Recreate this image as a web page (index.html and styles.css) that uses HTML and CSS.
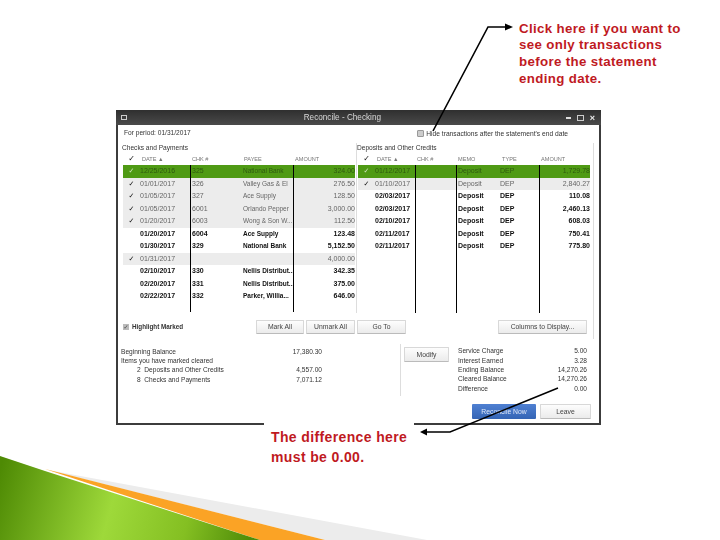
FILE: index.html
```html
<!DOCTYPE html>
<html lang="en">
<head>
<meta charset="utf-8">
<title>Reconcile - Checking</title>
<link rel="stylesheet" href="styles.css">
</head>
<body>
<div class="stage">
  <div class="window">
    <div class="titlebar">
      <span class="sysicon"></span>
      <span class="wintitle">Reconcile - Checking</span>
      <span class="winctrls"><i class="min"></i><i class="max"></i><b>×</b></span>
    </div>
    <div class="period">
      <span>For period: 01/31/2017</span>
      <label class="hide"><span class="box"></span>Hide transactions after the statement's end date</label>
    </div>
    <div class="lists">
      <section class="list left">
        <h2>Checks and Payments</h2>
        <div class="row head"><span class="ck">✓</span><span>DATE ▲</span><span>CHK #</span><span>PAYEE</span><span>AMOUNT</span></div>
        <div class="row sel"><span class="ck">✓</span><span>12/25/2016</span><span>325</span><span>National Bank</span><span>324.00</span></div>
        <div class="row mark"><span class="ck">✓</span><span>01/01/2017</span><span>326</span><span>Valley Gas &amp; El</span><span>276.50</span></div>
        <div class="row mark"><span class="ck">✓</span><span>01/05/2017</span><span>327</span><span>Ace Supply</span><span>128.50</span></div>
        <div class="row mark"><span class="ck">✓</span><span>01/05/2017</span><span>6001</span><span>Orlando Pepper</span><span>3,000.00</span></div>
        <div class="row mark"><span class="ck">✓</span><span>01/20/2017</span><span>6003</span><span>Wong &amp; Son W...</span><span>112.50</span></div>
        <div class="row"><span class="ck"></span><span>01/20/2017</span><span>6004</span><span>Ace Supply</span><span>123.48</span></div>
        <div class="row"><span class="ck"></span><span>01/30/2017</span><span>329</span><span>National Bank</span><span>5,152.50</span></div>
        <div class="row mark"><span class="ck">✓</span><span>01/31/2017</span><span></span><span></span><span>4,000.00</span></div>
        <div class="row"><span class="ck"></span><span>02/10/2017</span><span>330</span><span>Nellis Distribut...</span><span>342.35</span></div>
        <div class="row"><span class="ck"></span><span>02/20/2017</span><span>331</span><span>Nellis Distribut...</span><span>375.00</span></div>
        <div class="row"><span class="ck"></span><span>02/22/2017</span><span>332</span><span>Parker, Willia...</span><span>646.00</span></div>
        <div class="row tail"><span></span><span></span><span></span><span></span><span></span></div>
      </section>
      <section class="list right">
        <h2>Deposits and Other Credits</h2>
        <div class="row head"><span class="ck">✓</span><span>DATE ▲</span><span>CHK #</span><span>MEMO</span><span>TYPE</span><span>AMOUNT</span></div>
        <div class="row sel"><span class="ck">✓</span><span>01/12/2017</span><span></span><span>Deposit</span><span>DEP</span><span>1,729.78</span></div>
        <div class="row mark"><span class="ck">✓</span><span>01/10/2017</span><span></span><span>Deposit</span><span>DEP</span><span>2,840.27</span></div>
        <div class="row"><span class="ck"></span><span>02/03/2017</span><span></span><span>Deposit</span><span>DEP</span><span>110.08</span></div>
        <div class="row"><span class="ck"></span><span>02/03/2017</span><span></span><span>Deposit</span><span>DEP</span><span>2,460.13</span></div>
        <div class="row"><span class="ck"></span><span>02/10/2017</span><span></span><span>Deposit</span><span>DEP</span><span>608.03</span></div>
        <div class="row"><span class="ck"></span><span>02/11/2017</span><span></span><span>Deposit</span><span>DEP</span><span>750.41</span></div>
        <div class="row"><span class="ck"></span><span>02/11/2017</span><span></span><span>Deposit</span><span>DEP</span><span>775.80</span></div>
        <div class="row fill"><span></span><span></span><span></span><span></span><span></span><span></span></div>
      </section>
    </div>
    <div class="actions">
      <label class="highlight"><span class="tick">✓</span>Highlight Marked</label>
      <button class="btn mark-all">Mark All</button>
      <button class="btn unmark-all">Unmark All</button>
      <button class="btn goto">Go To</button>
      <button class="btn columns">Columns to Display...</button>
    </div>
    <div class="summary">
      <div class="sum-left">
        <div class="sum-row"><span>Beginning Balance</span><span>17,380.30</span></div>
        <div class="sum-row"><span>Items you have marked cleared</span><span></span></div>
        <div class="sum-row sub"><span>2 &nbsp;Deposits and Other Credits</span><span>4,557.00</span></div>
        <div class="sum-row sub"><span>8 &nbsp;Checks and Payments</span><span>7,071.12</span></div>
      </div>
      <div class="sum-right">
        <button class="btn modify">Modify</button>
        <div class="totals">
          <div class="sum-row"><span>Service Charge</span><span>5.00</span></div>
          <div class="sum-row"><span>Interest Earned</span><span>3.28</span></div>
          <div class="sum-row"><span>Ending Balance</span><span>14,270.26</span></div>
          <div class="sum-row"><span>Cleared Balance</span><span>14,270.26</span></div>
          <div class="sum-row"><span>Difference</span><span>0.00</span></div>
        </div>
      </div>
    </div>
    <div class="finish">
      <button class="btn primary">Reconcile Now</button>
      <button class="btn leave">Leave</button>
    </div>
  </div>

  <svg class="swoosh" viewBox="0 0 720 540" aria-hidden="true">
    <defs>
      <linearGradient id="leaf" gradientUnits="userSpaceOnUse" x1="0" y1="470" x2="250" y2="540">
        <stop offset="0" stop-color="#4e8a04"/>
        <stop offset=".45" stop-color="#9ed93a"/>
        <stop offset=".75" stop-color="#84bf22"/>
        <stop offset="1" stop-color="#4f8c08"/>
      </linearGradient>
    </defs>
    <polygon points="48,470 427,540 325,540" fill="#ececec"/>
    <polygon points="45,469 325,540 260,540" fill="#fba325"/>
    <polygon points="0,456 45,471 260,540 0,540" fill="url(#leaf)"/>
  </svg>

  <div class="note note-diff">The difference here<br>must be <strong>0.00</strong>.</div>
  <div class="note note-click">Click here if you want to<br>see only transactions<br>before the statement<br>ending date.</div>

  <svg class="arrows" viewBox="0 0 720 540" aria-hidden="true">
    <polyline points="433,131 488,27 506,27" fill="none" stroke="#000" stroke-width="1.6"/>
    <polygon points="513,27 505,23.5 505,30.5" fill="#000"/>
    <polyline points="558,388 450,432 426,432" fill="none" stroke="#000" stroke-width="1.4"/>
    <polygon points="420,432 427,428.5 427,435.5" fill="#000"/>
  </svg>
</div>
</body>
</html>
```
FILE: styles.css
```css
* { box-sizing: border-box; }
html, body { margin: 0; padding: 0; background: #fff; }
.stage {
  position: relative;
  width: 720px;
  height: 540px;
  overflow: hidden;
  font-family: "Liberation Sans", Arial, sans-serif;
}
.window {
  width: 485px;
  height: 315px;
  margin: 110px 0 0 116px;
  float: left;
  background: #fff;
  border: 2px solid #3c3c3c;
  border-top: 0;
  font-size: 7px;
  color: #222;
  filter: blur(0.35px);
}
.titlebar {
  height: 15px;
  margin: 0 -2px;
  padding: 0 6px 0 5px;
  display: flex;
  align-items: center;
  position: relative;
  background: linear-gradient(#2f2f2f, #4a4a4a);
  color: #d8d8d8;
}
.sysicon { width: 6px; height: 5px; border: 1px solid #ccc; }
.wintitle { flex: 1; text-align: center; font-size: 8.2px; padding-right: 8px; }
.winctrls { display: flex; align-items: center; gap: 6px; }
.winctrls .min { width: 5px; height: 2px; background: #ddd; }
.winctrls .max { width: 7px; height: 6px; border: 1px solid #ccc; }
.winctrls b { font-size: 9px; line-height: 8px; color: #eee; }
.period {
  height: 18px;
  padding: 3px 31px 0 6px;
  display: flex;
  align-items: flex-start;
  font-size: 6.6px;
  line-height: 9px;
  color: #333;
}
.hide { display: flex; align-items: center; margin-left: auto; white-space: nowrap; font-size: 6.7px; line-height: 9px; padding-top: 1px; }
.box {
  width: 7px;
  height: 7px;
  margin-right: 2px;
  border: 1px solid #999;
  border-radius: 1px;
  background: #ccc;
}
.lists { display: flex; padding-left: 4px; }
.list { width: 235px; }
.list.left { border-right: 1px solid #ddd; }
.list.right { width: 237px; border-right: 1px solid #ddd; }
.list h2 {
  height: 10px;
  margin: 0;
  font-size: 6.6px;
  line-height: 10px;
  font-weight: normal;
  color: #333;
}
.row {
  display: grid;
  height: 12.55px;
  margin-left: 1px;
  align-items: stretch;
  font-weight: bold;
  color: #111;
  white-space: nowrap;
}
.left .row { grid-template-columns: 17px 50px 52px 51px 62px; width: 232px; }
.right .row { grid-template-columns: 17px 40px 41px 44px 39px 51px; width: 232px; }
.row > span { line-height: 12.55px; overflow: hidden; }
.left .row > span:nth-child(3),
.left .row > span:nth-child(5),
.right .row > span:nth-child(3),
.right .row > span:nth-child(4),
.right .row > span:nth-child(6) { border-left: 1px solid #000; padding-left: 1px; }
.row > span:last-child { text-align: right; padding-right: 0; }
.left .row > span:nth-child(4) { padding-left: 1px; font-size: 6.5px; }
.ck { font-family: "DejaVu Sans", sans-serif; font-size: 7px; font-weight: normal; text-align: center; color: #222; }
.row.head {
  height: 12px;
  font-size: 5.6px;
  font-weight: normal;
  color: #777;
}
.row.head > span,
.row.head > span:nth-child(n) { border-left: 0; line-height: 12px; padding-left: 2px; text-align: left; font-size: 5.6px; }
.row.head > .ck:nth-child(n) { font-size: 8px; color: #111; padding: 0; text-align: center; }
.row.sel { background: #4f9a14; color: #2f5a10; font-weight: normal; }
.row.sel .ck { color: #cfe3bb; }
.row.mark { background: #ececec; color: #666; font-weight: normal; }
.row.mark .ck { color: #111; }
.row.tail { height: 9px; }
.row.fill { height: 59.8px; }
.row.fill > span { line-height: 1; }
.actions {
  display: flex;
  align-items: flex-start;
  gap: 2px;
  height: 26px;
  margin-right: 5px;
  padding: 7px 6px 0 5px;
  border-right: 1px solid #ddd;
}
.highlight { width: 131px; height: 14px; display: flex; align-items: center; font-weight: bold; color: #333; font-size: 6.3px; }
.tick {
  width: 6px;
  height: 6px;
  margin-right: 3px;
  background: #bbb;
  color: #444;
  font-family: "DejaVu Sans", sans-serif;
  font-size: 6px;
  line-height: 6px;
  text-align: center;
}
.btn {
  height: 14px;
  padding: 0;
  border: 1px solid #d8d8d8;
  border-bottom-color: #bbb;
  border-radius: 1px;
  background: linear-gradient(#fdfdfd, #ebebeb);
  font-family: inherit;
  font-size: 6.8px;
  color: #444;
  white-space: nowrap;
}
.mark-all { width: 48px; }
.unmark-all { width: 49px; }
.goto { width: 49px; }
.columns { width: 89px; margin-left: auto; }
.summary { display: flex; height: 52px; margin-top: 5px; }
.sum-left { width: 201px; margin-left: 3px; padding-top: 3px; }
.sum-row {
  display: flex;
  justify-content: space-between;
  height: 9.4px;
  line-height: 9.4px;
  font-size: 6.6px;
  color: #333;
  white-space: nowrap;
}
.sum-row.sub { padding-left: 16px; }
.sum-right {
  display: flex;
  margin-left: 78px;
  padding-left: 3px;
  border-left: 1px solid #ddd;
  align-items: flex-start;
}
.modify { width: 45px; height: 15px; margin-top: 3px; }
.totals { width: 129px; margin-left: 9px; padding-top: 2.5px; }
.finish { display: flex; justify-content: flex-end; gap: 4px; margin-top: 8px; padding-right: 8px; }
.primary {
  width: 64px;
  height: 15px;
  border: 0;
  background: linear-gradient(#4f80d2, #3565b5);
  color: #dfe8f8;
}
.leave { width: 51px; height: 15px; }
.swoosh, .arrows {
  position: absolute;
  left: 0;
  top: 0;
  width: 720px;
  height: 540px;
}
.note {
  position: absolute;
  color: #bf1a1f;
  font-weight: bold;
  background: #fff;
}
.note strong { font-weight: bold; }
.note-diff {
  left: 264px;
  top: 420px;
  width: 150px;
  padding: 7px 0 0 7px;
  font-size: 14px;
  line-height: 20px;
  letter-spacing: 0.37px;
}
.note-click {
  left: 519px;
  top: 20.5px;
  font-size: 13.3px;
  line-height: 16.8px;
  letter-spacing: 0.35px;
  white-space: nowrap;
}
```
